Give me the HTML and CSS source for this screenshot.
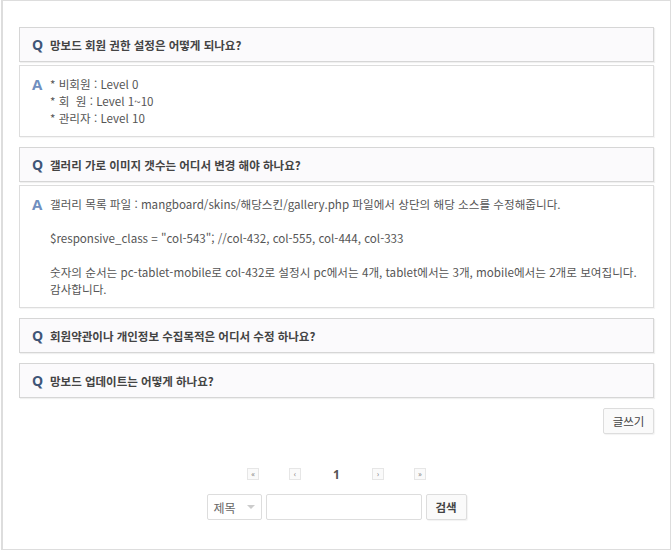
FILE: index.html
```html
<!DOCTYPE html>
<html lang="ko">
<head>
    <meta charset="UTF-8">
    <meta name="viewport" content="width=device-width, initial-scale=1.0">
    <title>FAQ</title>
    <link rel="stylesheet" href="styles.css">
</head>
<body>
<div class="board">

    <!-- FAQ list -->
    <div class="faq-list">
        <div class="faq-item">
            <div class="faq-q"><span class="mark">Q</span>망보드 회원 권한 설정은 어떻게 되나요?</div>
            <div class="faq-a">
                <span class="mark">A</span>
                <div class="answer">
                    * 비회원 : Level 0<br>
                    * 회&nbsp;&nbsp;원 : Level 1~10<br>
                    * 관리자 : Level 10
                </div>
            </div>
        </div>

        <div class="faq-item">
            <div class="faq-q"><span class="mark">Q</span>갤러리 가로 이미지 갯수는 어디서 변경 해야 하나요?</div>
            <div class="faq-a">
                <span class="mark">A</span>
                <div class="answer">
                    갤러리 목록 파일 : mangboard/skins/해당스킨/gallery.php 파일에서 상단의 해당 소스를 수정해줍니다.<br>
                    <br>
                    $responsive_class = "col-543"; //col-432, col-555, col-444, col-333<br>
                    <br>
                    숫자의 순서는 pc-tablet-mobile로 col-432로 설정시 pc에서는 4개, tablet에서는 3개, mobile에서는 2개로 보여집니다.<br>
                    감사합니다.
                </div>
            </div>
        </div>

        <div class="faq-item">
            <div class="faq-q"><span class="mark">Q</span>회원약관이나 개인정보 수집목적은 어디서 수정 하나요?</div>
        </div>

        <div class="faq-item">
            <div class="faq-q"><span class="mark">Q</span>망보드 업데이트는 어떻게 하나요?</div>
        </div>
    </div>

    <div class="board-buttons">
        <button type="button" class="btn btn-write">글쓰기</button>
    </div>

    <!-- Pagination -->
    <div class="pagination">
        <a class="page-icon" href="#">&laquo;</a>
        <a class="page-icon" href="#">&lsaquo;</a>
        <span class="page-num">1</span>
        <a class="page-icon" href="#">&rsaquo;</a>
        <a class="page-icon" href="#">&raquo;</a>
    </div>

    <!-- Search -->
    <form class="search">
        <div class="select">
            <span>제목</span>
            <span class="caret"></span>
        </div>
        <input type="text" class="search-input">
        <button type="button" class="btn btn-search">검색</button>
    </form>

</div>
</body>
</html>
```

FILE: styles.css
```css
/* board styling */
body {
    margin: 0;
    padding: 0;
    background-color: #fff;
    font-family: "Noto Sans CJK KR", "Open Sans", sans-serif;
    font-size: 12px;
    color: #555;
}

.board {
    margin: 0 1px;
    height: 550px;
    box-sizing: border-box;
    border: 1px solid #ddd;
    border-left-width: 2px;
    padding: 26px 16px 0 16px;
}

.faq-item {
    margin-bottom: 10px;
}

.faq-q {
    display: flex;
    align-items: center;
    height: 35px;
    box-sizing: border-box;
    padding: 0 12px;
    background-color: #fbfafc;
    border: 1px solid #d6d6d6;
    box-shadow: 1px 1px 1px rgba(0, 0, 0, 0.06);
    font-weight: bold;
    font-size: 11.5px;
    color: #444;
}

.faq-q .mark {
    color: #3f5577;
    font-family: "Open Sans", sans-serif;
    font-size: 14px;
    width: 18px;
}

.faq-a {
    display: flex;
    margin-top: 3px;
    padding: 10px 12px 9px 12px;
    border: 1px solid #ddd;
    box-shadow: 1px 1px 1px rgba(0, 0, 0, 0.04);
    line-height: 17px;
}

.faq-a .mark {
    color: #6f8fc0;
    font-family: "Open Sans", sans-serif;
    font-weight: bold;
    font-size: 15px;
    width: 18px;
    flex: none;
}

.answer {
    font-size: 11.6px;
    color: #555;
}

.board-buttons {
    display: flex;
    justify-content: flex-end;
    margin-top: 3px;
}

.btn {
    height: 26px;
    padding: 0;
    background-color: #fafafa;
    border: 1px solid #ddd;
    border-radius: 2px;
    box-shadow: 1px 1px 1px rgba(0, 0, 0, 0.05);
    font-family: "Noto Sans CJK KR", sans-serif;
    font-size: 11.5px;
    color: #444;
    cursor: pointer;
}

.btn-write {
    width: 51px;
}

.pagination {
    display: flex;
    justify-content: center;
    align-items: center;
    margin-top: 32px;
    height: 16px;
}

.page-icon {
    width: 12px;
    height: 12px;
    box-sizing: border-box;
    margin: 0 15px;
    border: 1px solid #e6e6e6;
    background-color: #fafafa;
    font-size: 8px;
    line-height: 10px;
    text-align: center;
    color: #777;
    text-decoration: none;
}

.page-num {
    margin: 0 17px;
    font-family: "Open Sans", sans-serif;
    font-size: 12px;
    font-weight: bold;
    color: #555;
}

.search {
    display: flex;
    justify-content: center;
    gap: 4px;
    margin-top: 12px;
}

.select {
    display: flex;
    align-items: center;
    justify-content: space-between;
    width: 55px;
    height: 26px;
    box-sizing: border-box;
    padding: 0 6px;
    border: 1px solid #ddd;
    border-radius: 2px;
    color: #666;
}

.caret {
    width: 0;
    height: 0;
    border-left: 4px solid transparent;
    border-right: 4px solid transparent;
    border-top: 4px solid #ccc;
}

.search-input {
    width: 156px;
    height: 26px;
    box-sizing: border-box;
    border: 1px solid #ddd;
    border-radius: 2px;
}

.btn-search {
    width: 41px;
    font-weight: bold;
}
```
